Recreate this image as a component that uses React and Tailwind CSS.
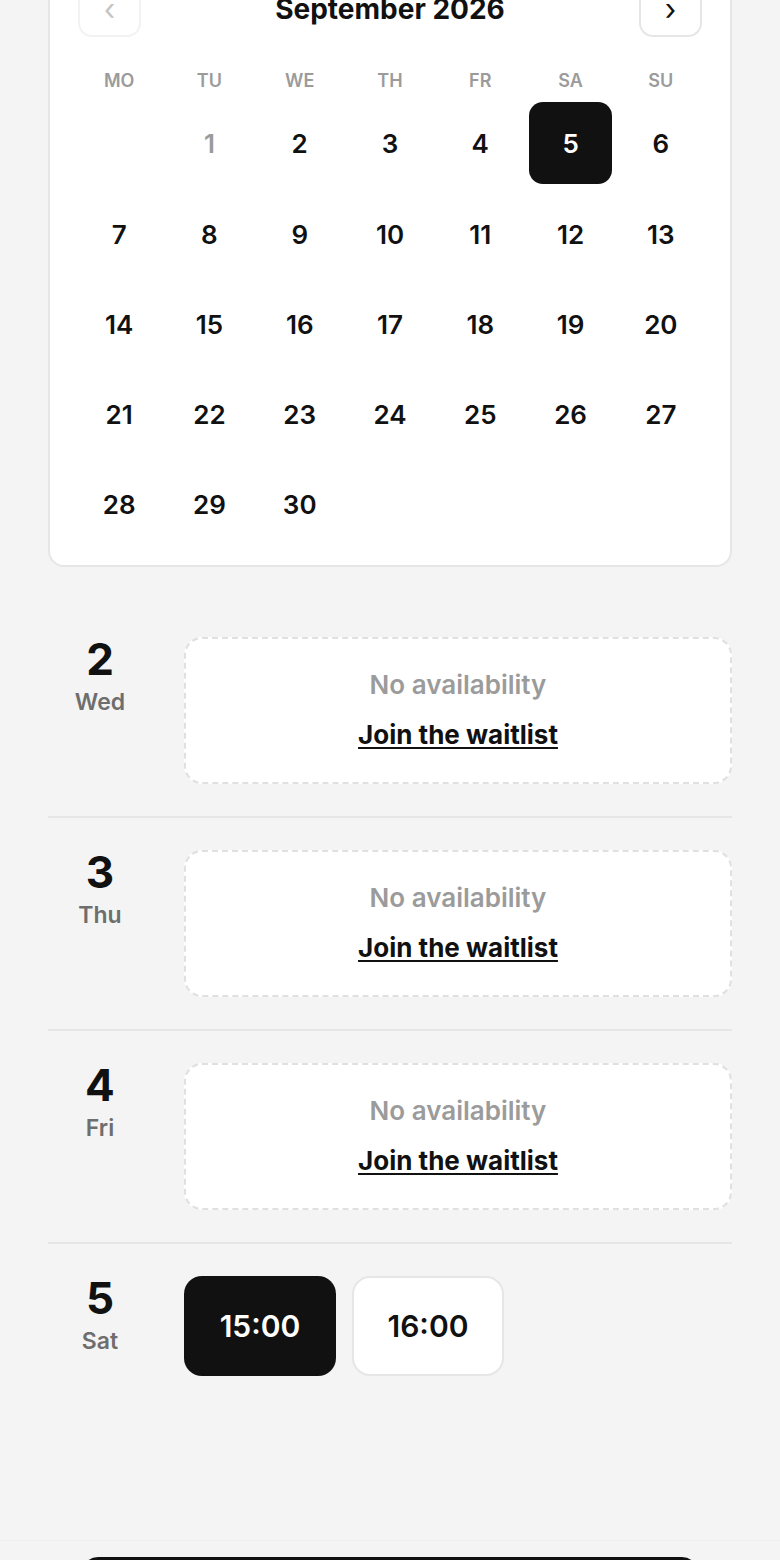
import React, { useState } from 'react';

const WEEKDAYS = ['MO', 'TU', 'WE', 'TH', 'FR', 'SA', 'SU'];

// September 2026 starts on a Tuesday
const buildWeeks = () => {
  const cells = [null];
  for (let d = 1; d <= 30; d++) cells.push(d);
  const weeks = [];
  for (let i = 0; i < cells.length; i += 7) weeks.push(cells.slice(i, i + 7));
  return weeks;
};

const SCHEDULE = [
  { day: 2, label: 'Wed', slots: [] },
  { day: 3, label: 'Thu', slots: [] },
  { day: 4, label: 'Fri', slots: [] },
  { day: 5, label: 'Sat', slots: ['15:00', '16:00'] },
];

export default function App() {
  const [selectedDay, setSelectedDay] = useState(5);
  const [selectedSlot, setSelectedSlot] = useState('15:00');
  const weeks = buildWeeks();

  return (
    <div className="min-h-screen flex flex-col bg-[#f4f4f4] text-[#111] font-['Inter','Noto_Sans',sans-serif] px-[48px]">
      {/* Calendario */}
      <div className="-mt-[49px] bg-white border-2 border-[#e6e6e6] rounded-[16px] px-[28px] pt-[28px] pb-[20px]">
        <div className="flex items-center justify-between h-14">
          <button className="w-[63px] h-14 rounded-[14px] border-2 border-[#f2f2f2] flex items-center justify-center text-[30px] leading-none text-[#c4c4c4]">
            ‹
          </button>
          <h2 className="text-[28px] font-bold leading-none">September 2026</h2>
          <button className="w-[63px] h-14 rounded-[14px] border-2 border-[#e6e6e6] flex items-center justify-center text-[30px] leading-none text-[#111]">
            ›
          </button>
        </div>

        <div className="grid grid-cols-7 gap-x-2 mt-[32px]">
          {WEEKDAYS.map(w => (
            <div key={w} className="h-6 leading-6 text-center text-[18px] font-semibold text-[#9b9b9b]">
              {w}
            </div>
          ))}
        </div>

        <div className="flex flex-col gap-2 mt-[9px]">
          {weeks.map((week, wi) => (
            <div key={wi} className={`grid grid-cols-7 gap-x-2 ${wi === 0 ? 'mb-px' : ''}`}>
              {week.map((d, i) => {
                if (d === null) return <div key={`e-${i}`} className="h-[82px]" />;
                const isSelected = d === selectedDay;
                const isPast = d === 1;
                return (
                  <button
                    key={d}
                    onClick={() => setSelectedDay(d)}
                    className={`h-[82px] rounded-[14px] flex items-center justify-center text-[26px] font-semibold ${
                      isSelected ? 'bg-[#111] text-white' : isPast ? 'text-[#9b9b9b]' : 'text-[#111]'
                    }`}
                  >
                    {d}
                  </button>
                );
              })}
            </div>
          ))}
        </div>
      </div>

      {/* Horarios por día */}
      <div className="mt-[38px]">
        {SCHEDULE.map((row, idx) => (
          <div
            key={row.day}
            className={`flex items-start gap-8 pt-[32px] pb-[32px] ${idx < SCHEDULE.length - 1 ? 'border-b-2 border-[#e6e6e6]' : ''}`}
          >
            <div className="w-[104px] shrink-0 text-center">
              <div className="text-[44px] font-bold leading-none">{row.day}</div>
              <div className="mt-[10px] text-[23px] font-semibold leading-none text-[#6e6e6e]">{row.label}</div>
            </div>

            {row.slots.length === 0 ? (
              <div className="flex-1 bg-white border-2 border-dashed border-[#e0e0e0] rounded-[18px] pt-[30px] pb-[31px] flex flex-col items-center">
                <p className="text-[26px] leading-8 font-semibold text-[#9b9b9b]">No availability</p>
                <a href="#" className="mt-[18px] text-[26px] leading-8 font-bold text-[#111] underline decoration-2 underline-offset-[3px]">
                  Join the waitlist
                </a>
              </div>
            ) : (
              <div className="flex gap-4">
                {row.slots.map(s => (
                  <button
                    key={s}
                    onClick={() => setSelectedSlot(s)}
                    className={`w-[152px] h-[100px] rounded-[18px] text-[30px] font-semibold ${
                      selectedSlot === s ? 'bg-[#111] text-white' : 'bg-white border-2 border-[#e6e6e6] text-[#111]'
                    }`}
                  >
                    {s}
                  </button>
                ))}
              </div>
            )}
          </div>
        ))}
      </div>

      {/* Barra inferior */}
      <div className="fixed bottom-0 left-0 right-0 h-5 overflow-hidden bg-[#f4f4f4] border-t border-[#efefef] px-[82px]">
        <button className="mt-[16px] w-full h-14 rounded-[16px] bg-[#111] text-white text-[22px] font-semibold">
          Continue
        </button>
      </div>
    </div>
  );
}
